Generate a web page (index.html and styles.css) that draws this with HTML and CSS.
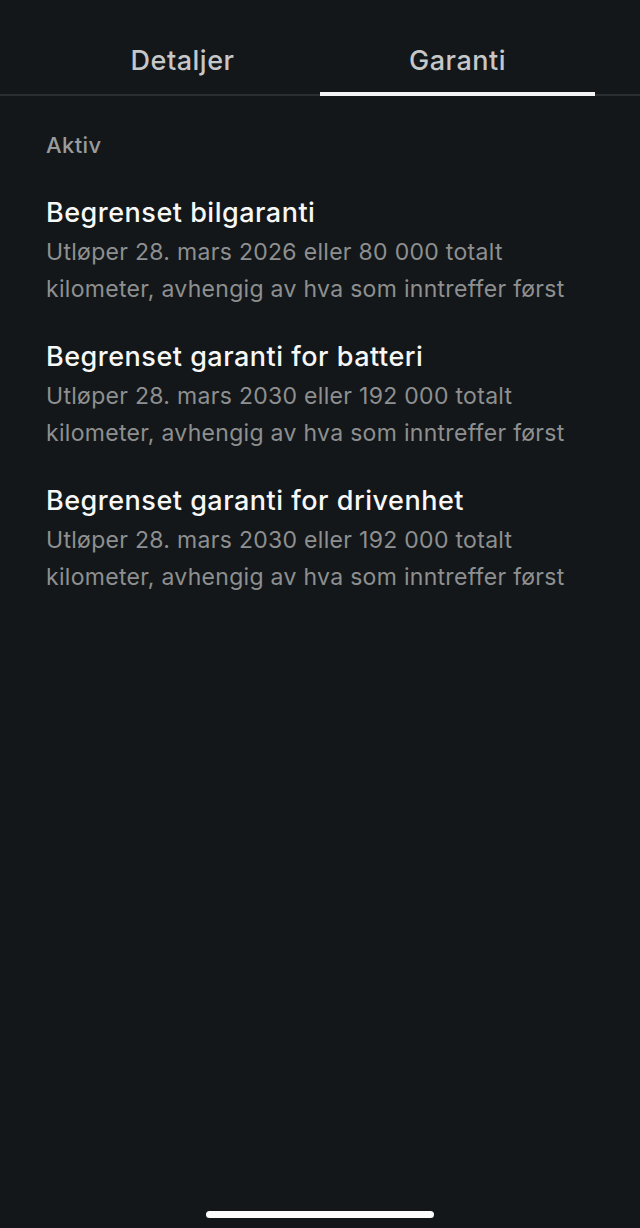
FILE: index.html
```html
<!DOCTYPE html>
<html lang="nb">
<head>
<meta charset="UTF-8">
<meta name="viewport" content="width=device-width, initial-scale=1.0">
<title>Garanti</title>
<link rel="stylesheet" href="styles.css">
</head>
<body>
<div class="screen">
  <div class="tabs">
    <div class="tab">Detaljer</div>
    <div class="tab tab-active">Garanti</div>
  </div>
  <div class="content">
    <div class="section-label">Aktiv</div>
    <div class="warranty">
      <div class="warranty-title">Begrenset bilgaranti</div>
      <div class="warranty-text">Utløper 28. mars 2026 eller 80 000 totalt kilometer, avhengig av hva som inntreffer først</div>
    </div>
    <div class="warranty">
      <div class="warranty-title">Begrenset garanti for batteri</div>
      <div class="warranty-text">Utløper 28. mars 2030 eller 192 000 totalt kilometer, avhengig av hva som inntreffer først</div>
    </div>
    <div class="warranty">
      <div class="warranty-title">Begrenset garanti for drivenhet</div>
      <div class="warranty-text">Utløper 28. mars 2030 eller 192 000 totalt kilometer, avhengig av hva som inntreffer først</div>
    </div>
  </div>
  <div class="home-indicator"></div>
</div>
</body>
</html>
```

FILE: styles.css
```css
body {
  margin: 0;
  padding: 0;
  background-color: #131719;
  font-family: Inter, "Noto Sans", sans-serif;
}

.screen {
  height: 1228px;
  display: flex;
  flex-direction: column;
}

.tabs {
  display: flex;
  padding: 0 45px;
  height: 96px;
  border-bottom: 2px solid #2a2e31;
  box-sizing: border-box;
}

.tab {
  flex: 1;
  text-align: center;
  color: #c6c7c8;
  font-size: 27px;
  font-weight: 500;
  letter-spacing: 0.5px;
  padding-top: 44px;
  box-sizing: border-box;
  height: 96px;
}

.tab-active {
  border-bottom: 4px solid #f4f4f4;
  height: 96px;
  margin-bottom: -2px;
}

.content {
  flex: 1;
  padding: 35px 46px 0;
}

.section-label {
  color: #9a9b9c;
  font-size: 22px;
  font-weight: 500;
  letter-spacing: 0.4px;
  line-height: 28px;
  margin-bottom: 34px;
}

.warranty {
  margin-bottom: 29px;
}

.warranty-title {
  color: #f7f7f7;
  font-size: 27px;
  font-weight: 500;
  letter-spacing: 0.5px;
  line-height: 40px;
}

.warranty-text {
  color: #8e8f90;
  font-size: 23px;
  letter-spacing: 0.3px;
  line-height: 37px;
  margin-top: 1px;
  max-width: 530px;
}

.home-indicator {
  align-self: center;
  width: 228px;
  height: 7px;
  border-radius: 4px;
  background-color: #fdfdfd;
  margin-bottom: 10px;
}
```
